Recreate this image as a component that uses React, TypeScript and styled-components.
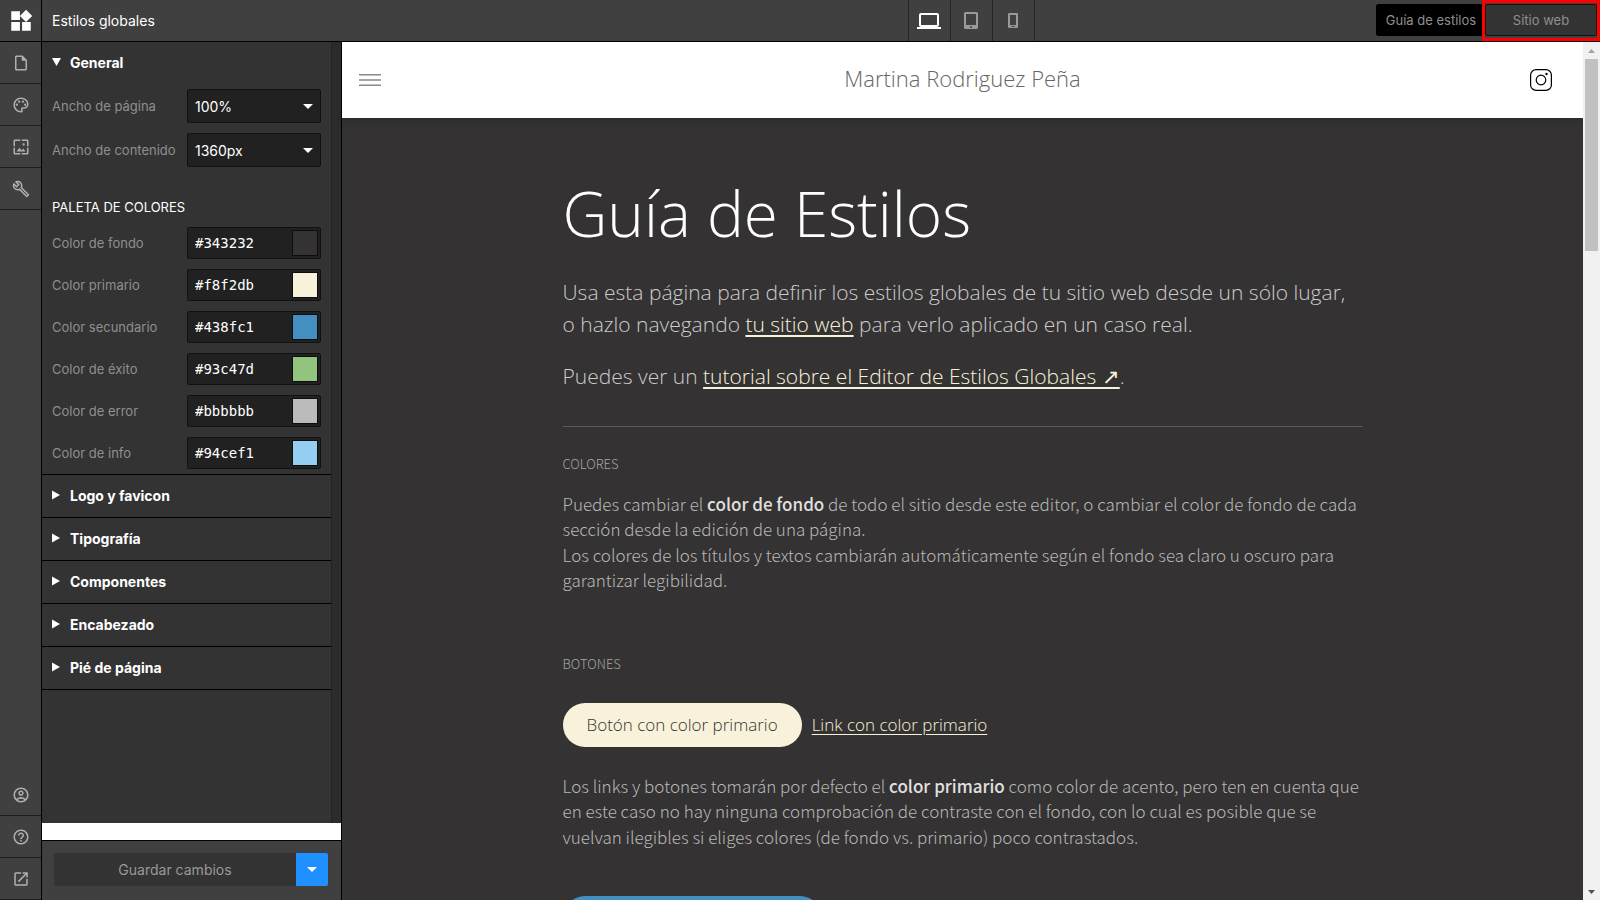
import React, { useState } from 'react';
import styled, { createGlobalStyle } from 'styled-components';
import {
  MdHelpOutline,
  MdLaptop,
  MdOpenInNew,
  MdOutlineAccountCircle,
  MdOutlineBuild,
  MdOutlineInsertDriveFile,
  MdOutlinePalette,
  MdWallpaper,
  MdWidgets,
} from 'react-icons/md';

const ui = '"Inter", "Liberation Sans", sans-serif';
const site = '"Open Sans", "Noto Sans", sans-serif';
const siteText = '"Noto Sans CJK JP", "Open Sans", sans-serif';
const mono = '"DejaVu Sans Mono", "Liberation Mono", monospace';

const GlobalStyle = createGlobalStyle`
  *, *::before, *::after { box-sizing: border-box; }
  body { margin: 0; background: #343232; }
  button, input, select { font: inherit; color: inherit; margin: 0; }
  h1, h2, h3, p { margin: 0; }
`;

const Shell = styled.div`
  display: grid;
  grid-template-columns: 42px 300px minmax(0, 1fr);
  grid-template-rows: 42px minmax(0, 1fr);
  height: 100vh;
  overflow: hidden;
  font-family: ${ui};
  font-size: 13px;
  color: #fff;
`;

/* Icon rail */

const Rail = styled.nav`
  grid-row: 1 / 3;
  display: flex;
  flex-direction: column;
  background: #404040;
  border-right: 1px solid #000;
`;

const RailButton = styled.button<{ $brand?: boolean }>`
  display: flex;
  align-items: center;
  justify-content: center;
  flex: none;
  height: 42px;
  padding: 1px 0 0 1px;
  border: 0;
  border-bottom: 1px solid ${p => (p.$brand ? '#000' : '#1f1f1f')};
  background: none;
  color: ${p => (p.$brand ? '#fff' : '#b0b0b0')};
  font-size: ${p => (p.$brand ? 26 : 18)}px;
`;

const RailSpacer = styled.div`
  flex: 1;
`;

/* Top bar */

const TopBar = styled.header`
  grid-column: 2 / 4;
  display: grid;
  grid-template-columns: 300px minmax(0, 1fr) auto minmax(0, 1fr);
  background: #404040;
  border-bottom: 1px solid #000;
`;

const Title = styled.h2`
  align-self: center;
  padding-left: 10px;
  font-size: 14px;
  font-weight: 400;
`;

const Devices = styled.div`
  grid-column: 3;
  display: flex;
  border-left: 1px solid #262626;
`;

const DeviceButton = styled.button<{ $active?: boolean }>`
  display: flex;
  align-items: center;
  justify-content: center;
  width: 42px;
  padding: 0;
  border: 0;
  border-right: 1px solid #262626;
  background: none;
  color: ${p => (p.$active ? '#fff' : '#999')};
  font-size: 24px;
`;

const ViewSwitch = styled.div`
  display: flex;
  justify-content: flex-end;
`;

const ViewButton = styled.button<{ $current?: boolean }>`
  width: ${p => (p.$current ? 106 : 112)}px;
  height: 32px;
  margin-top: ${p => (p.$current ? 4 : 1)}px;
  padding: ${p => (p.$current ? '0 0 0 4px' : '0')};
  border: 1px solid ${p => (p.$current ? '#000' : '#111')};
  border-radius: ${p => (p.$current ? '2px 0 0 2px' : '2px')};
  background: ${p => (p.$current ? '#000' : '#333')};
  color: #8f8f8f;
`;

const Highlight = styled.div`
  display: flex;
  align-items: flex-start;
  border: 3px solid #f00;
`;

/* Side panel */

const Side = styled.aside`
  display: flex;
  flex-direction: column;
  min-height: 0;
  border-right: 1px solid #000;
  background: #fff;
`;

const SideScroll = styled.div`
  flex: 1;
  min-height: 0;
  display: grid;
  grid-template-columns: minmax(0, 1fr) 10px;
  margin-bottom: 17px;
  background: #333;
  overflow: hidden;
`;

const SideGutter = styled.div`
  border-left: 1px solid #222;
  background: #2b2b2b;
`;

const Section = styled.section`
  border-bottom: 1px solid #000;
`;

const SectionToggle = styled.button`
  display: flex;
  align-items: center;
  width: 100%;
  height: 42px;
  padding: 0 10px 2px;
  border: 0;
  background: none;
  font-size: 14px;
  font-weight: 700;
  text-align: left;
`;

const Marker = styled.svg`
  width: 18px;
  height: 10px;
  fill: #fff;
`;

const Fields = styled.div`
  display: flex;
  flex-direction: column;
  gap: 10px;
  padding: 5px 10px;
`;

const FieldRow = styled.div`
  display: grid;
  grid-template-columns: 135px minmax(0, 1fr);
  align-items: center;
`;

const Label = styled.label`
  color: #8f8f8f;
`;

const Heading = styled.h3`
  margin-top: 20px;
  font-size: 13px;
  line-height: 20px;
  font-weight: 400;
`;

const SelectBox = styled.div`
  position: relative;
`;

const Select = styled.select`
  display: block;
  width: 100%;
  height: 34px;
  padding: 0 7px;
  border: 1px solid #111;
  border-radius: 2px;
  background: #212121;
  font-size: 14px;
  appearance: none;
`;

const SelectCaret = styled.svg`
  position: absolute;
  right: 8px;
  top: 15px;
  pointer-events: none;
  fill: #fff;
`;

const ColorBox = styled.div`
  display: flex;
  align-items: center;
  height: 32px;
  padding: 0 2px 0 7px;
  border: 1px solid #111;
  border-radius: 2px;
  background: #212121;
`;

const HexInput = styled.input`
  flex: 1;
  min-width: 0;
  padding: 0;
  border: 0;
  outline: 0;
  background: none;
  font-family: ${mono};
  font-size: 14px;
`;

const Swatch = styled.input`
  flex: none;
  width: 26px;
  height: 26px;
  padding: 0;
  border: 1px solid #0d0d0d;
  background: none;
  appearance: none;

  &::-webkit-color-swatch-wrapper { padding: 0; }
  &::-webkit-color-swatch { border: 0; border-radius: 0; }
`;

const SaveBar = styled.footer`
  flex: none;
  display: flex;
  height: 60px;
  padding: 12px 13px 14px 12px;
  border-top: 1px solid #000;
  background: #404040;
`;

const SaveButton = styled.button`
  flex: 1;
  padding: 0;
  border: 0;
  border-radius: 2px 0 0 2px;
  background: #333;
  color: #999;
  font-size: 14px;
`;

const SaveMenu = styled.button`
  display: flex;
  align-items: center;
  justify-content: center;
  width: 32px;
  padding: 0;
  border: 0;
  border-radius: 0 2px 2px 0;
  background: #1e90ff;
  fill: #fff;
`;

/* Site preview */

const Preview = styled.main`
  display: grid;
  grid-template-columns: minmax(0, 1fr) 17px;
  min-height: 0;
  font-family: ${site};
  font-weight: 300;
`;

const Page = styled.div`
  min-height: 0;
  overflow: hidden;
  background: #343232;
`;

const SiteHeader = styled.header`
  display: grid;
  grid-template-columns: minmax(0, 1fr) auto minmax(0, 1fr);
  align-items: center;
  height: 76px;
  padding: 0 31px 0 17px;
  background: #fff;
  box-shadow: 0 1px 12px rgba(0, 0, 0, 0.25);
`;

const IconButton = styled.button`
  display: flex;
  justify-self: start;
  padding: 0;
  border: 0;
  background: none;
`;

const IconLink = styled.a`
  display: flex;
  justify-self: end;
`;

const SiteName = styled.p`
  padding: 0 0 4px 14px;
  font-size: 22px;
  line-height: 32px;
  color: #666;
`;

const Article = styled.article`
  max-width: 800px;
  margin: 0 auto;
  padding-top: 58px;
`;

const PageTitle = styled.h1`
  margin-bottom: 27px;
  font-size: 62px;
  line-height: 74px;
  font-weight: 350;
`;

const TextLink = styled.a`
  color: #f8f2db;
  text-decoration: underline;
  text-underline-offset: 3px;
`;

const Lead = styled.p`
  margin-bottom: 21px;
  font-size: 21px;
  line-height: 1.5;
  font-weight: 330;
  color: #ccc;

  ${TextLink} { text-decoration-thickness: 2px; }
`;

const Rule = styled.hr`
  margin: 33px 0 27px;
  border: 0;
  border-top: 1px solid #5c5a5a;
`;

const Kicker = styled.h2`
  margin-bottom: 17px;
  font-family: ${siteText};
  font-size: 13px;
  line-height: 20px;
  font-weight: 300;
  text-transform: uppercase;
  color: #a6a6a6;
`;

const Copy = styled.p`
  margin-bottom: 61px;
  font-family: ${siteText};
  font-size: 17px;
  line-height: 1.5;
  color: #b8b7b7;
`;

const Strong = styled.strong`
  font-weight: 500;
  color: #e0e0e0;
`;

const Actions = styled.div`
  display: flex;
  align-items: center;
  gap: 10px;
  margin: 29px 0 26px;
  font-size: 17px;

  ${Copy} + & { margin-top: -14px; }
`;

const Pill = styled.button<{ $tone: 'primary' | 'secondary' }>`
  height: 44px;
  padding: 0 24px;
  border: 0;
  border-radius: 22px;
  background: ${p => (p.$tone === 'primary' ? '#f8f2db' : '#438fc1')};
  color: ${p => (p.$tone === 'primary' ? '#343232' : '#fff')};
`;

const ScrollTrack = styled.div`
  display: flex;
  flex-direction: column;
  align-items: center;
  background: #f1f1f1;
`;

const ScrollArrow = styled.svg<{ $enabled?: boolean }>`
  flex: none;
  width: 17px;
  height: 17px;
  fill: ${p => (p.$enabled ? '#505050' : '#a3a3a3')};
`;

const ScrollThumb = styled.div`
  width: 13px;
  height: 192px;
  margin-bottom: auto;
  background: #c1c1c1;
`;

const palette = [
  ['Color de fondo', '#343232'],
  ['Color primario', '#f8f2db'],
  ['Color secundario', '#438fc1'],
  ['Color de éxito', '#93c47d'],
  ['Color de error', '#bbbbbb'],
  ['Color de info', '#94cef1'],
];

const closedSections = ['Logo y favicon', 'Tipografía', 'Componentes', 'Encabezado', 'Pié de página'];

function SelectField({ id, label, options }: { id: string; label: string; options: string[] }) {
  return (
    <FieldRow>
      <Label htmlFor={id}>{label}</Label>
      <SelectBox>
        <Select id={id} defaultValue={options[0]}>
          {options.map(o => (
            <option key={o}>{o}</option>
          ))}
        </Select>
        <SelectCaret width="10" height="5" viewBox="0 0 10 5">
          <path d="M0 0h10L5 5z" />
        </SelectCaret>
      </SelectBox>
    </FieldRow>
  );
}

function ColorField({ label, initial }: { label: string; initial: string }) {
  const [value, setValue] = useState(initial);
  const id = label.toLowerCase().replace(/ /g, '-');
  return (
    <FieldRow>
      <Label htmlFor={id}>{label}</Label>
      <ColorBox>
        <HexInput id={id} type="text" value={value} spellCheck={false} onChange={e => setValue(e.target.value)} />
        <Swatch type="color" aria-label={label} value={value} onChange={e => setValue(e.target.value)} />
      </ColorBox>
    </FieldRow>
  );
}

export default function App() {
  return (
    <>
      <GlobalStyle />
      <Shell>
        <Rail aria-label="Principal">
          <RailButton $brand aria-label="Inicio"><MdWidgets /></RailButton>
          <RailButton aria-label="Páginas"><MdOutlineInsertDriveFile /></RailButton>
          <RailButton aria-label="Estilos"><MdOutlinePalette /></RailButton>
          <RailButton aria-label="Imágenes"><MdWallpaper /></RailButton>
          <RailButton aria-label="Herramientas"><MdOutlineBuild /></RailButton>
          <RailSpacer />
          <RailButton aria-label="Cuenta"><MdOutlineAccountCircle /></RailButton>
          <RailButton aria-label="Ayuda"><MdHelpOutline /></RailButton>
          <RailButton aria-label="Abrir sitio"><MdOpenInNew /></RailButton>
        </Rail>

        <TopBar>
          <Title>Estilos globales</Title>
          <Devices>
            <DeviceButton $active aria-label="Escritorio">
              <MdLaptop />
            </DeviceButton>
            <DeviceButton aria-label="Tableta">
              <svg width="14" height="17" viewBox="0 0 14 17" fill="currentColor" fillRule="evenodd">
                <path d="M1.500 0h11A1.500 1.500 0 0 1 14 1.500v14a1.500 1.500 0 0 1-1.500 1.500h-11A1.500 1.500 0 0 1 0 15.500v-14A1.500 1.500 0 0 1 1.500 0zM2 2V13h10V2zM7 14a1 1 0 1 0 0 2 1 1 0 0 0 0-2z" />
              </svg>
            </DeviceButton>
            <DeviceButton aria-label="Móvil">
              <svg width="10" height="15" viewBox="0 0 10 15" fill="currentColor" fillRule="evenodd">
                <path d="M1.200 0h7.600A1.200 1.200 0 0 1 10 1.200v12.600A1.200 1.200 0 0 1 8.800 15H1.200A1.200 1.200 0 0 1 0 13.800V1.200A1.200 1.200 0 0 1 1.200 0zM2 2V12h6V2zM3.500 13v1h3v-1z" />
              </svg>
            </DeviceButton>
          </Devices>
          <ViewSwitch>
            <ViewButton $current>Guía de estilos</ViewButton>
            <Highlight>
              <ViewButton>Sitio web</ViewButton>
            </Highlight>
          </ViewSwitch>
        </TopBar>

        <Side>
          <SideScroll>
            <div>
              <Section>
                <SectionToggle aria-expanded="true">
                  <Marker viewBox="0 0 18 10"><path d="M0 1h9L4.500 9z" /></Marker>
                  General
                </SectionToggle>
                <Fields>
                  <SelectField id="ancho-pagina" label="Ancho de página" options={['100%']} />
                  <SelectField id="ancho-contenido" label="Ancho de contenido" options={['1360px']} />
                  <Heading>PALETA DE COLORES</Heading>
                  {palette.map(([label, hex]) => (
                    <ColorField key={label} label={label} initial={hex} />
                  ))}
                </Fields>
              </Section>
              {closedSections.map(name => (
                <Section key={name}>
                  <SectionToggle aria-expanded="false">
                    <Marker viewBox="0 0 18 10"><path d="M0 .5v9L8 5z" /></Marker>
                    {name}
                  </SectionToggle>
                </Section>
              ))}
            </div>
            <SideGutter />
          </SideScroll>
          <SaveBar>
            <SaveButton>Guardar cambios</SaveButton>
            <SaveMenu aria-label="Más opciones">
              <svg width="10" height="5" viewBox="0 0 10 5"><path d="M0 0h10L5 5z" /></svg>
            </SaveMenu>
          </SaveBar>
        </Side>

        <Preview>
          <Page>
            <SiteHeader>
              <IconButton aria-label="Menú">
                <svg width="22" height="12" viewBox="0 0 22 12" stroke="#8a8a8a" strokeWidth="1.500">
                  <path d="M0 .75h22M0 6h22M0 11.250h22" />
                </svg>
              </IconButton>
              <SiteName>Martina Rodriguez Peña</SiteName>
              <IconLink href="#instagram" aria-label="Instagram">
                <svg width="22" height="22" viewBox="0 0 22 22" fill="none" stroke="#000" strokeWidth="1.200">
                  <rect x=".6" y=".6" width="20.800" height="20.800" rx="5.500" />
                  <circle cx="11" cy="11" r="4.800" />
                  <circle cx="16.500" cy="5" r="1.200" fill="#000" stroke="none" />
                </svg>
              </IconLink>
            </SiteHeader>

            <Article>
              <PageTitle>Guía de Estilos</PageTitle>
              <Lead>
                Usa esta página para definir los estilos globales de tu sitio web desde un sólo lugar, o hazlo
                navegando <TextLink href="#sitio">tu sitio web</TextLink> para verlo aplicado en un caso real.
              </Lead>
              <Lead>
                Puedes ver un{' '}
                <TextLink href="#tutorial">tutorial sobre el Editor de Estilos Globales ↗</TextLink>.
              </Lead>
              <Rule />
              <Kicker>Colores</Kicker>
              <Copy>
                Puedes cambiar el <Strong>color de fondo</Strong> de todo el sitio desde este editor, o cambiar el
                color de fondo de cada sección desde la edición de una página.
                <br />
                Los colores de los títulos y textos cambiarán automáticamente según el fondo sea claro u oscuro para
                garantizar legibilidad.
              </Copy>
              <Kicker>Botones</Kicker>
              <Actions>
                <Pill $tone="primary">Botón con color primario</Pill>
                <TextLink href="#primario">Link con color primario</TextLink>
              </Actions>
              <Copy>
                Los links y botones tomarán por defecto el <Strong>color primario</Strong> como color de acento, pero
                ten en cuenta que en este caso no hay ninguna comprobación de contraste con el fondo, con lo cual es
                posible que se vuelvan ilegibles si eliges colores (de fondo vs. primario) poco contrastados.
              </Copy>
              <Actions>
                <Pill $tone="secondary">Botón con color secundario</Pill>
              </Actions>
            </Article>
          </Page>
          <ScrollTrack aria-hidden="true">
            <ScrollArrow viewBox="0 0 17 17"><path d="M5 11h7L8.500 7z" /></ScrollArrow>
            <ScrollThumb />
            <ScrollArrow $enabled viewBox="0 0 17 17"><path d="M5 7h7l-3.500 4z" /></ScrollArrow>
          </ScrollTrack>
        </Preview>
      </Shell>
    </>
  );
}
